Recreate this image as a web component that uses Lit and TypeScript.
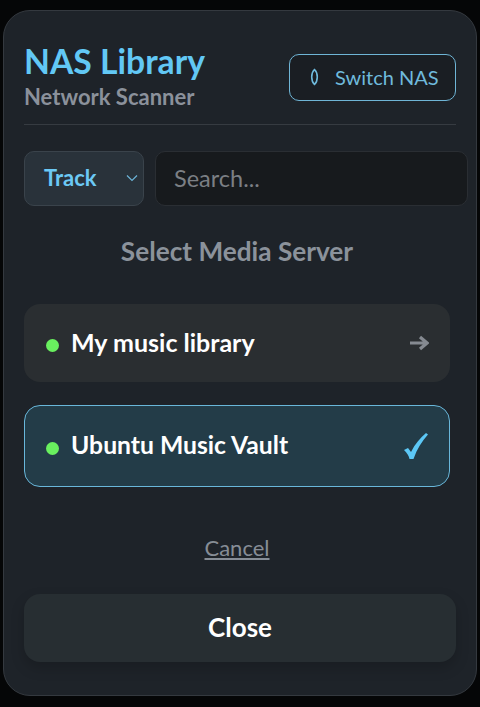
import { LitElement, html, css } from "lit";
import { customElement } from "lit/decorators.js";

@customElement("app-root")
export class AppRoot extends LitElement {
  static styles = css`
    :host { display: block; width: 480px; height: 707px; background: #050607; overflow: hidden; font-family: "Lato", "Noto Sans", sans-serif; }
    .card { box-sizing: border-box; width: 474px; height: 686px; margin: 10px 0 0 3px; padding: 0 20px; background: #1e2329; border: 1px solid #34393f; border-radius: 27px; display: flex; flex-direction: column; align-items: flex-start; }
    .header { width: 432px; height: 114px; box-sizing: border-box; border-bottom: 1px solid #363b41; display: flex; justify-content: space-between; align-items: flex-start; padding-top: 29px; flex: none; }
    h1 { margin: 0; font-size: 33.7px; line-height: 42px; font-weight: 700; color: #62c8f5; }
    .sub { margin-top: 2px; font-size: 22px; line-height: 26px; font-weight: 700; color: #8b919b; }
    .switch { box-sizing: border-box; margin-top: 14px; width: 167px; height: 47px; border: 1.5px solid #6fb5d6; border-radius: 10px; background: #1a1e23; color: #6fbadc; display: flex; align-items: center; gap: 15px; padding: 0 0 2px 19px; font-size: 20px; }
    .filters { display: flex; gap: 11px; margin-top: 26px; flex: none; }
    .select { box-sizing: border-box; width: 120px; height: 55px; background: #29323a; border: 1px solid #3a434b; border-radius: 10px; display: flex; align-items: center; justify-content: space-between; padding: 0 5px 2px 19px; color: #6cc9f5; font-size: 22px; font-weight: 700; }
    .input { box-sizing: border-box; width: 313px; height: 55px; background: #171a1d; border: 1px solid #2a2e33; border-radius: 10px; display: flex; align-items: center; padding: 0 0 2px 18px; color: #7b7f84; font-size: 23.5px; }
    h2 { margin: 28px 0 0; width: 426px; text-align: center; font-size: 26.2px; line-height: 34px; font-weight: 700; color: #8b929b; }
    .server { box-sizing: border-box; width: 426px; display: flex; align-items: center; border-radius: 16px; padding: 0 21px 0 22px; color: #fff; font-weight: 700; }
    .one { height: 78px; margin-top: 36px; background: #2a2e31; font-size: 25px; }
    .two { height: 82px; margin-top: 23px; background: #233c48; border: 1.5px solid #69b7da; font-size: 24.7px; padding: 0 21px 0 21px; }
    .dot { width: 13px; height: 13px; border-radius: 50%; background: #69f05f; margin: 4px 12px 0 0; flex: none; }
    .name { flex: 1; padding-bottom: 3px; }
    .cancel { width: 426px; text-align: center; margin-top: 46px; font-size: 22px; line-height: 30px; color: #868d96; text-decoration: underline; }
    .close { box-sizing: border-box; width: 432px; height: 68px; margin-top: 31px; padding-bottom: 2px; background: #272e32; border-radius: 16px; display: flex; align-items: center; justify-content: center; color: #fff; font-size: 26px; font-weight: 700; box-shadow: 0 6px 14px rgba(0,0,0,.18); }
  `;

  render() {
    return html`<div class="card">
      <div class="header">
        <div><h1>NAS Library</h1><div class="sub">Network Scanner</div></div>
        <div class="switch">
          <svg width="11" height="18" viewBox="0 0 11 18" fill="none" stroke="currentColor" stroke-width="1.6"><path d="M5.500 1.500C1.800 5 1.800 13 5.500 16.500C9.200 13 9.200 5 5.500 1.500Z"/></svg>
          <span>Switch NAS</span>
        </div>
      </div>
      <div class="filters">
        <div class="select"><span>Track</span>
          <svg width="12" height="8" viewBox="0 0 12 8" fill="none" stroke="#6cb4d8" stroke-width="1.2"><path d="M1 1.500L6 6.500L11 1.500"/></svg>
        </div>
        <div class="input">Search...</div>
      </div>
      <h2>Select Media Server</h2>
      <div class="server one"><span class="dot"></span><span class="name">My music library</span>
        <svg width="20" height="16" viewBox="0 0 20 16" fill="none" stroke="#858a91" stroke-width="3.2"><path d="M1 8H17M11 2L18 8L11 14"/></svg>
      </div>
      <div class="server two"><span class="dot"></span><span class="name">Ubuntu Music Vault</span>
        <svg width="24" height="26" viewBox="0 0 24 26"><path d="M0 17L4 15L7 19C11 11 16 5 22 0L24 1.500C18 8 13 16 9.500 26L5.500 26C5 23 3 20 0 17Z" fill="#5cc8f6"/></svg>
      </div>
      <div class="cancel">Cancel</div>
      <div class="close">Close</div>
    </div>`;
  }
}
